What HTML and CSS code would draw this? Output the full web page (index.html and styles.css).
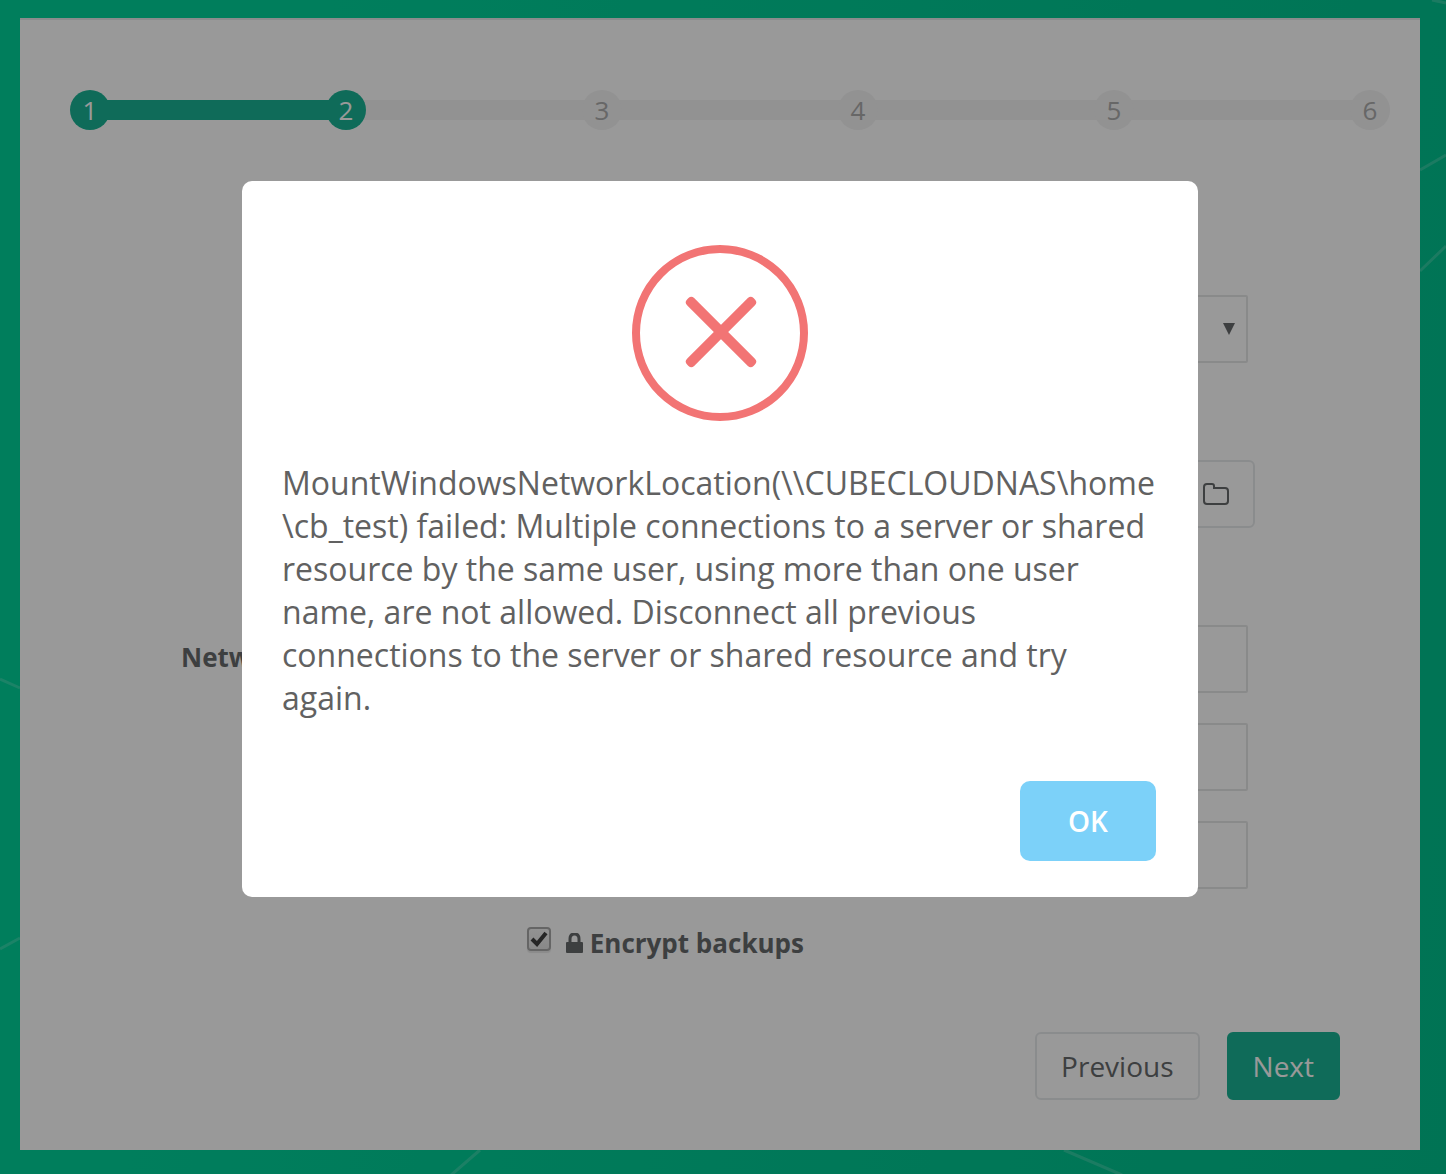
FILE: index.html
```html
<!DOCTYPE html>
<html lang="en">

<head>
    <meta charset="UTF-8">
    <meta name="viewport" content="width=device-width, initial-scale=1.0">
    <title>Backup setup</title>
    <link rel="stylesheet" href="styles.css">
</head>

<body>
    <svg class="backdrop" viewBox="0 0 1446 1174" preserveAspectRatio="none" aria-hidden="true">
        <path d="M0 679L20 688M0 949L20 938M480 1150L450 1176M1064 1150L1122 1175M1420 170L1446 155M1420 271L1446 246M1432 0L1446 3" />
    </svg>

    <main class="panel">
        <ol class="steps">
            <li class="done"><span>1</span></li>
            <li class="done"><span>2</span></li>
            <li><span>3</span></li>
            <li><span>4</span></li>
            <li><span>5</span></li>
            <li><span>6</span></li>
        </ol>

        <form class="form">
            <div class="row spaced">
                <div class="select-wrap">
                    <select class="field" aria-label="Type">
                        <option></option>
                    </select>
                    <svg class="arrow" width="12" height="12" viewBox="0 0 12 12"><path d="M0 0H12L6 12Z" /></svg>
                </div>
            </div>
            <div class="row spaced">
                <div class="input-group">
                    <input class="field" type="text" aria-label="Path">
                    <button class="browse" type="button" aria-label="Browse">
                        <svg width="26" height="22" viewBox="0 0 26 22"><path d="M1 4Q1 1 4 1H9Q11 1 11 3V5H22Q25 5 25 8V18Q25 21 22 21H4Q1 21 1 18Z" /></svg>
                    </button>
                </div>
            </div>
            <div class="row">
                <label for="user">Network</label>
                <input class="field" id="user" type="text">
            </div>
            <div class="row">
                <input class="field" type="password" aria-label="Password">
            </div>
            <div class="row">
                <input class="field" type="password" aria-label="Confirm password">
            </div>
            <div class="row">
                <div class="check">
                    <input type="checkbox" id="encrypt" checked>
                    <label for="encrypt">
                        <svg width="17" height="20" viewBox="0 0 17 20"><path class="shackle" d="M4 10V6Q4 1 8.5 1T13 6V10" /><rect y="9" width="17" height="11" rx="1" /></svg>
                        Encrypt backups
                    </label>
                </div>
            </div>
        </form>

        <div class="actions">
            <button class="btn" type="button">Previous</button>
            <button class="btn btn-primary" type="button">Next</button>
        </div>
    </main>

    <div class="overlay">
        <div class="modal" role="alertdialog" aria-modal="true" aria-describedby="message">
            <svg class="error-icon" width="176" height="176" viewBox="0 0 176 176">
                <circle cx="88" cy="88" r="84" />
                <rect x="42" y="82" width="94" height="10" rx="4" transform="rotate(45 89 87)" />
                <rect x="42" y="82" width="94" height="10" rx="4" transform="rotate(-45 89 87)" />
            </svg>
            <p id="message">MountWindowsNetworkLocation(\\CUBECLOUDNAS\home<wbr>\cb_test) failed: Multiple connections to a server or shared resource by the same user, using more than one user name, are not allowed. Disconnect all previous connections to the server or shared resource and try again.</p>
            <button class="ok" type="button">OK</button>
        </div>
    </div>
</body>

</html>
```
FILE: styles.css
```css
* {
    box-sizing: border-box;
}

body {
    margin: 0;
    min-height: 100vh;
    padding: 18px 26px 24px 20px;
    background: linear-gradient(100deg, #00d29a 0%, #00d29a 20%, #00c08d 100%);
    font-family: "Open Sans", sans-serif;
    font-size: 26px;
    color: #676a6c;
}

button,
input,
select {
    font: inherit;
    color: inherit;
}

.backdrop {
    position: absolute;
    top: 0;
    left: 0;
    width: 100%;
    height: 100%;
    stroke: rgba(255, 255, 255, 0.18);
    stroke-width: 3;
}

.panel {
    position: relative;
    padding: 70px 30px 50px 50px;
    background-color: #fff;
    border-top: 2px solid #e7eaec;
}

/* wizard steps */
.steps {
    display: flex;
    margin: 0;
    padding: 0;
    list-style: none;
    color: #acacac;
}

.steps li {
    display: flex;
    align-items: center;
}

.steps li + li {
    flex: 1;
}

.steps li + li::before {
    content: "";
    flex: 1;
    height: 20px;
    margin: 0 -4px;
    background-color: #f3f3f4;
}

.steps span {
    position: relative;
    z-index: 1;
    width: 40px;
    height: 40px;
    border-radius: 50%;
    background-color: #f3f3f4;
    line-height: 40px;
    text-align: center;
}

.steps .done span,
.steps li.done::before {
    background-color: #1ab394;
    color: #fff;
}

/* form */
.form {
    display: grid;
    gap: 30px;
    margin: 165px 142px 0 111px;
}

.row {
    display: grid;
    grid-template-columns: 316px 1fr;
    column-gap: 30px;
}

.row > :last-child {
    grid-column: 2;
}

.row > label {
    padding-top: 14px;
}

.spaced {
    margin-bottom: 67px;
}

label {
    font-weight: 700;
}

.field {
    width: 100%;
    height: 68px;
    padding: 0 24px;
    border: 2px solid #e5e6e7;
    border-radius: 2px;
    background-color: #fff;
    appearance: none;
}

.select-wrap {
    position: relative;
}

.arrow {
    position: absolute;
    top: 28px;
    right: 13px;
    fill: #676a6c;
    pointer-events: none;
}

.input-group {
    display: flex;
    margin-right: -7px;
}

.browse {
    height: 68px;
    padding: 0 24px;
    border: 2px solid #e7eaec;
    border-radius: 0 6px 6px 0;
    background-color: #fff;
}

.browse svg {
    display: block;
    fill: none;
    stroke: #676a6c;
    stroke-width: 2;
}

.check {
    display: flex;
    gap: 15px;
    padding-top: 6px;
}

.check input {
    width: 24px;
    height: 24px;
    margin: 2px 0 0;
    appearance: none;
    border: 2px solid #a8a8a8;
    border-radius: 4px;
    box-shadow: 0 2px 1px #e8e8e8;
    background: url("data:image/svg+xml,%3Csvg xmlns='http://www.w3.org/2000/svg' viewBox='0 0 20 20'%3E%3Cpath d='M3 10L8 15L17 4' fill='none' stroke='%23404040' stroke-width='4'/%3E%3C/svg%3E") center / 20px 20px no-repeat, linear-gradient(#f4f4f4, #e4e4e4);
}

.check label svg {
    fill: #676a6c;
}

.shackle {
    fill: none;
    stroke: #676a6c;
    stroke-width: 3;
}

.actions {
    display: flex;
    justify-content: flex-end;
    gap: 27px;
    margin: 71px 50px 0 0;
}

.btn {
    height: 68px;
    padding: 0 24px;
    border: 2px solid #e7eaec;
    border-radius: 6px;
    background-color: #fff;
    font-size: 28px;
}

.btn-primary {
    border-color: #1ab394;
    background-color: #1ab394;
    color: #fff;
}

/* error dialog */
.overlay {
    position: fixed;
    inset: 0;
    z-index: 10;
    padding: 181px 26px 24px 20px;
    background-color: rgba(0, 0, 0, 0.4);
    overflow: auto;
}

.modal {
    display: flex;
    flex-direction: column;
    max-width: 956px;
    margin: 0 auto;
    padding: 64px 40px 36px;
    border-radius: 10px;
    background-color: #fff;
}

.error-icon {
    align-self: center;
    fill: #f27474;
}

.error-icon circle {
    fill: none;
    stroke: #f27474;
    stroke-width: 8;
}

.modal p {
    margin: 40px 0 62px;
    font-size: 32px;
    line-height: 43px;
    color: #616161;
}

.ok {
    align-self: flex-end;
    width: 136px;
    height: 80px;
    margin-right: 2px;
    border: none;
    border-radius: 10px;
    background-color: #7cd1f9;
    font-size: 28px;
    font-weight: 600;
    color: #fff;
}
```
